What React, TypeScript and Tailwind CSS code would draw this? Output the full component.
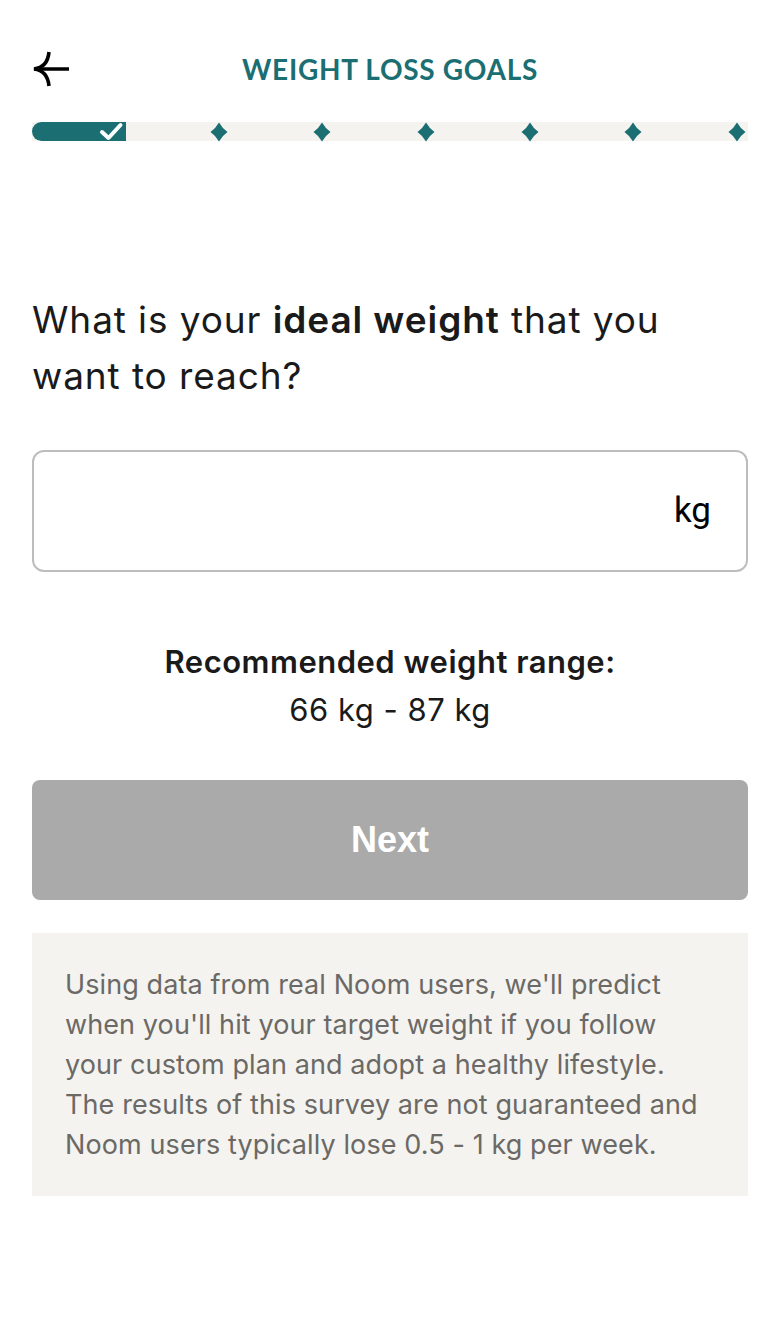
import React from 'react';

const TEAL = '#1b6f73';

function BackArrow() {
  return (
    <svg width="40" height="36" viewBox="0 0 40 36" fill="none" stroke="#000" strokeWidth="3.6" strokeLinecap="butt">
      <path d="M2 18 H37" />
      <path d="M17 1 C16 11 11 17 2 18 C11 19 16 25 17 35" />
    </svg>
  );
}

function Diamond() {
  return (
    <svg width="18" height="20" viewBox="0 0 18 20">
      <path d="M9 0.5 Q12.3 6.3 17.5 10 Q12.3 13.7 9 19.5 Q5.7 13.7 0.5 10 Q5.7 6.3 9 0.5 Z" fill={TEAL} />
    </svg>
  );
}

function Check() {
  return (
    <svg width="26" height="19" viewBox="0 0 26 19" fill="none" stroke="#fff" strokeWidth="4" strokeLinecap="round" strokeLinejoin="round">
      <path d="M4 10 L10.5 16 L22.5 3" />
    </svg>
  );
}

function Progress() {
  return (
    <div className="relative h-[19px] bg-[#f4f3ef]">
      <div className="absolute left-0 top-0 h-full w-[94px] rounded-l-full bg-[#1b6f73]" />
      <div className="relative flex h-full items-center justify-between pl-[66px] pr-[2px]">
        <Check />
        {[0, 1, 2, 3, 4, 5].map((i) => (
          <Diamond key={i} />
        ))}
      </div>
    </div>
  );
}

export default function App() {
  return (
    <div className="min-h-[1326px] w-[780px] bg-white px-8 font-['Inter',sans-serif] text-[#1a1a1a]">
      <header className="relative mt-[46px] flex h-[46px] items-center justify-center">
        <button className="absolute left-0 top-[5px]">
          <BackArrow />
        </button>
        <h1 className="font-['Lato',sans-serif] text-[28px] font-bold tracking-[0.7px] text-[#1b6f73]">
          WEIGHT LOSS GOALS
        </h1>
      </header>

      <div className="mt-[30px]">
        <Progress />
      </div>

      <h2 className="mt-[151px] max-w-[680px] text-[37px] leading-[56px] font-normal tracking-[0.9px]">
        What is your <span className="font-semibold">ideal weight</span> that you want to reach?
      </h2>

      <div className="mt-[46px] flex h-[122px] items-center justify-end rounded-[12px] border-2 border-[#bdbdbd] pr-[35px]">
        <span className="font-['Roboto',sans-serif] text-[35px] text-black">kg</span>
      </div>

      <div className="mt-[66px] text-center text-[31px] leading-[48px] tracking-[0.5px]">
        <p className="font-semibold">Recommended weight range:</p>
        <p>66 kg - 87 kg</p>
      </div>

      <button className="mt-[46px] flex h-[120px] w-full items-center justify-center rounded-[8px] bg-[#aaaaaa] font-['Liberation_Sans',Arial,sans-serif] text-[36px] font-bold text-white">
        Next
      </button>

      <div className="mt-[33px] bg-[#f4f3ef] pt-[32px] pb-[31px] pl-[33px] pr-[40px] text-[27px] leading-[40px] tracking-[0.1px] text-[#6b6966]">
        Using data from real Noom users, we'll predict when you'll hit your target weight if you follow your custom plan and adopt a healthy lifestyle. The results of this survey are not guaranteed and Noom users typically lose 0.5 - 1 kg per week.
      </div>
    </div>
  );
}
